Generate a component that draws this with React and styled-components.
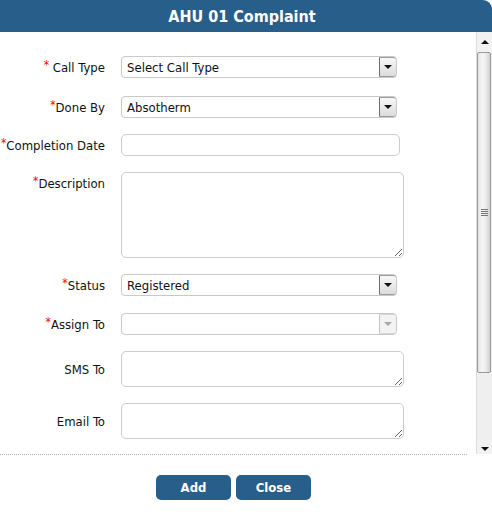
import React from "react";
import styled, { createGlobalStyle } from "styled-components";

const GlobalStyle = createGlobalStyle`
  html, body { margin: 0; padding: 0; background: #fff; }
  body {
    font-family: "DejaVu Sans Condensed", "DejaVu Sans", sans-serif;
    font-stretch: condensed;
  }
  * { box-sizing: border-box; }
`;

const BLUE = "#285e8a";

const Dialog = styled.div`
  width: 492px;
  height: 520px;
  display: flex;
  flex-direction: column;
  background: #fff;
`;

const Header = styled.div`
  height: 32px;
  background: ${BLUE};
  border-top-right-radius: 9px;
  display: flex;
  align-items: center;
  justify-content: center;
  color: #fff;
  font-weight: bold;
  font-size: 16px;
  padding-right: 8px;
`;

const Body = styled.div`
  height: 422px;
  display: flex;
`;

const FormArea = styled.div`
  flex: 1;
  padding-top: 24px;
`;

const Form = styled.div`
  display: grid;
  grid-template-columns: 105px 1fr;
  column-gap: 16px;
  row-gap: 16px;
  align-items: center;
`;

const Label = styled.label`
  justify-self: end;
  align-self: ${(p) => (p.$top ? "start" : "center")};
  padding-top: ${(p) => (p.$top ? "4px" : "0")};
  font-size: 13px;
  color: #111;
  white-space: nowrap;
  margin-bottom: ${(p) => p.$extra || 0}px;
`;

const Star = styled.span`
  color: #f00;
  font-size: 12px;
  position: relative;
  top: -3px;
`;

const SelectBox = styled.div`
  width: 276px;
  height: 22px;
  border: 1px solid #c9c9c9;
  border-radius: 4px;
  display: flex;
  align-items: stretch;
  background: #fff;
  margin-bottom: ${(p) => p.$extra || 0}px;
`;

const SelectValue = styled.span`
  flex: 1;
  display: flex;
  align-items: center;
  padding-left: 5px;
  font-size: 13px;
  color: #111;
`;

const ArrowButton = styled.span`
  width: 17px;
  border-left: 1px solid ${(p) => (p.$disabled ? "#c4c4c4" : "#6e6e6e")};
  border-top: 1px solid ${(p) => (p.$disabled ? "#d4d4d4" : "#9c9c9c")};
  border-bottom: 1px solid ${(p) => (p.$disabled ? "#d4d4d4" : "#9c9c9c")};
  background: ${(p) =>
    p.$disabled ? "#f3f3f3" : "linear-gradient(#f7f7f7, #dcdcdc)"};
  display: flex;
  align-items: center;
  justify-content: center;
  border-radius: 0 3px 3px 0;
`;

const Tri = styled.span`
  width: 0;
  height: 0;
  border-left: 4px solid transparent;
  border-right: 4px solid transparent;
  border-${(p) => (p.$up ? "bottom" : "top")}: 4px solid ${(p) => p.$color || "#111"};
`;

const TextInput = styled.input`
  width: 279px;
  height: 22px;
  border: 1px solid #cccccc;
  border-radius: 5px;
  font-size: 13px;
  outline: none;
  padding: 0 5px;
`;

const TextArea = styled.textarea`
  width: 283px;
  height: ${(p) => p.$h}px;
  border: 1px solid #cccccc;
  border-radius: 5px;
  font-size: 13px;
  outline: none;
  padding: 4px;
  resize: both;
  display: block;
  font-family: inherit;
`;

const ScrollBar = styled.div`
  width: 16px;
  background: #efefef;
  border-left: 1px solid #dcdcdc;
  display: flex;
  flex-direction: column;
`;

const ScrollBtn = styled.div`
  height: ${(p) => p.$h}px;
  display: flex;
  justify-content: center;
  align-items: ${(p) => (p.$end ? "flex-end" : "center")};
  padding-bottom: ${(p) => (p.$end ? "3px" : "0")};
  background: #f2f2f2;
`;

const Thumb = styled.div`
  height: 321px;
  margin-right: 1px;
  border: 1px solid #9a9a9a;
  border-radius: 2px;
  background: linear-gradient(to right, #e2e2e2, #f6f6f6 35%, #ececec 65%, #cfcfcf);
  display: flex;
  align-items: center;
  justify-content: center;
`;

const Grip = styled.div`
  width: 7px;
  height: 7px;
  background: repeating-linear-gradient(#777 0 1px, transparent 1px 2px);
`;

const Track = styled.div`
  flex: 1;
  background: #efefef;
`;

const Footer = styled.div`
  width: 467px;
  border-top: 1px dotted #b5b5b5;
  padding-top: 20px;
  display: flex;
  justify-content: center;
  gap: 5px;
`;

const Button = styled.button`
  width: 75px;
  height: 25px;
  border: none;
  border-radius: 5px;
  background: ${BLUE};
  color: #fff;
  font-family: inherit;
  font-stretch: condensed;
  font-weight: bold;
  font-size: 13px;
  padding: 0;
`;

function Select({ value, disabled, extra }) {
  return (
    <SelectBox $extra={extra}>
      <SelectValue>{value}</SelectValue>
      <ArrowButton $disabled={disabled}>
        <Tri $color={disabled ? "#a8a8a8" : "#111"} />
      </ArrowButton>
    </SelectBox>
  );
}

export default function App() {
  return (
    <>
      <GlobalStyle />
      <Dialog>
        <Header>AHU 01 Complaint</Header>
        <Body>
          <FormArea>
            <Form>
              <Label $extra={2}>
                <Star>*</Star> Call Type
              </Label>
              <Select value="Select Call Type" extra={2} />

              <Label>
                <Star>*</Star>Done By
              </Label>
              <Select value="Absotherm" />

              <Label>
                <Star>*</Star>Completion Date
              </Label>
              <TextInput type="text" />

              <Label $top>
                <Star>*</Star>Description
              </Label>
              <TextArea $h={86} />

              <Label $extra={1}>
                <Star>*</Star>Status
              </Label>
              <Select value="Registered" extra={1} />

              <Label>
                <Star>*</Star>Assign To
              </Label>
              <Select value="" disabled />

              <Label>SMS To</Label>
              <TextArea $h={36} />

              <Label>Email To</Label>
              <TextArea $h={36} />
            </Form>
          </FormArea>
          <ScrollBar>
            <ScrollBtn $h={20}>
              <Tri $up />
            </ScrollBtn>
            <Thumb>
              <Grip />
            </Thumb>
            <Track />
            <ScrollBtn $h={14} $end>
              <Tri />
            </ScrollBtn>
          </ScrollBar>
        </Body>
        <Footer>
          <Button>Add</Button>
          <Button>Close</Button>
        </Footer>
      </Dialog>
    </>
  );
}
